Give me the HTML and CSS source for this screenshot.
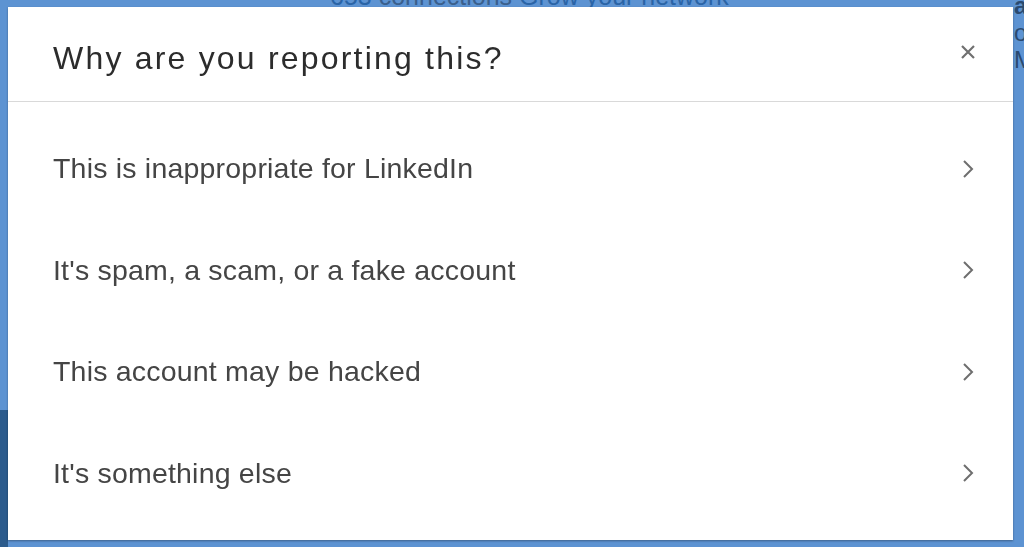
FILE: index.html
```
<!DOCTYPE html>
<html>
<head>
<meta charset="utf-8">
<link rel="stylesheet" href="styles.css">
</head>
<body>
<div class="page">
  <div class="bg-top"><span class="num">653</span> connections <span class="link">Grow your network</span></div>
  <div class="bg-right">
    <div class="bg-line dark">annive</div>
    <div class="bg-line">or</div>
    <div class="bg-line">M</div>
  </div>
  <div class="bg-bottom-left"></div>
</div>
<div class="modal" role="dialog">
  <div class="modal-header">
    <h2 class="modal-title">Why are you reporting this?</h2>
    <button class="close" aria-label="Close">
      <svg width="16" height="16" viewBox="0 0 16 16"><path d="M2 2L14 14M14 2L2 14" stroke="#707070" stroke-width="2.2" fill="none"/></svg>
    </button>
  </div>
  <ul class="options">
    <li class="option"><span>This is inappropriate for LinkedIn</span><svg class="chev" width="12" height="20" viewBox="0 0 12 20"><path d="M2 2L10 10L2 18" stroke="#6e6e6e" stroke-width="2" fill="none"/></svg></li>
    <li class="option"><span>It's spam, a scam, or a fake account</span><svg class="chev" width="12" height="20" viewBox="0 0 12 20"><path d="M2 2L10 10L2 18" stroke="#6e6e6e" stroke-width="2" fill="none"/></svg></li>
    <li class="option"><span>This account may be hacked</span><svg class="chev" width="12" height="20" viewBox="0 0 12 20"><path d="M2 2L10 10L2 18" stroke="#6e6e6e" stroke-width="2" fill="none"/></svg></li>
    <li class="option"><span>It's something else</span><svg class="chev" width="12" height="20" viewBox="0 0 12 20"><path d="M2 2L10 10L2 18" stroke="#6e6e6e" stroke-width="2" fill="none"/></svg></li>
  </ul>
</div>
</body>
</html>
```
FILE: styles.css
```
html, body {
  margin: 0;
  padding: 0;
  width: 1024px;
  height: 547px;
  overflow: hidden;
  background: #5d93d2;
  font-family: "Liberation Sans", Arial, sans-serif;
}

.page {
  position: relative;
  width: 1024px;
  height: 547px;
  overflow: hidden;
  background: #5d93d2;
}

.bg-top {
  position: absolute;
  left: 330px;
  top: -18px;
  font-size: 25px;
  line-height: 28px;
  color: #3a5f8c;
  white-space: nowrap;
}
.bg-top .num { color: #2a64a6; }
.bg-top .link { color: #2a64a6; }

.bg-right {
  position: absolute;
  left: 1014px;
  top: -8px;
  font-size: 24px;
  color: #2a4a70;
  line-height: 27px;
}
.bg-right .dark { font-weight: bold; }

.bg-bottom-left {
  position: absolute;
  left: 0;
  top: 410px;
  width: 8px;
  height: 137px;
  background: #2c5b8c;
}

.modal {
  position: fixed;
  left: 8px;
  top: 7px;
  width: 1005px;
  height: 533px;
  background: #fff;
  box-shadow: 0 1px 2px rgba(0, 0, 0, 0.35);
  display: flex;
  flex-direction: column;
}

.modal-header {
  height: 94px;
  border-bottom: 1px solid #d9d9d9;
  display: flex;
  align-items: center;
  justify-content: space-between;
  padding: 0 37px 0 45px;
}

.modal-title {
  margin: 0;
  margin-top: 8px;
  font-weight: normal;
  font-size: 32px;
  letter-spacing: 2.2px;
  color: #2c2c2c;
}

.close {
  background: none;
  border: 0;
  padding: 0;
  margin-top: -4px;
  width: 16px;
  height: 16px;
  cursor: pointer;
}
.close svg { display: block; }

.options {
  list-style: none;
  margin: 0;
  padding: 16px 0;
  flex: 1;
  display: flex;
  flex-direction: column;
}

.option {
  flex: 1;
  display: flex;
  align-items: center;
  justify-content: space-between;
  padding: 0 39px 0 45px;
  font-size: 28.5px;
  letter-spacing: 0.2px;
  color: #454545;
}

.chev { display: block; }
```
